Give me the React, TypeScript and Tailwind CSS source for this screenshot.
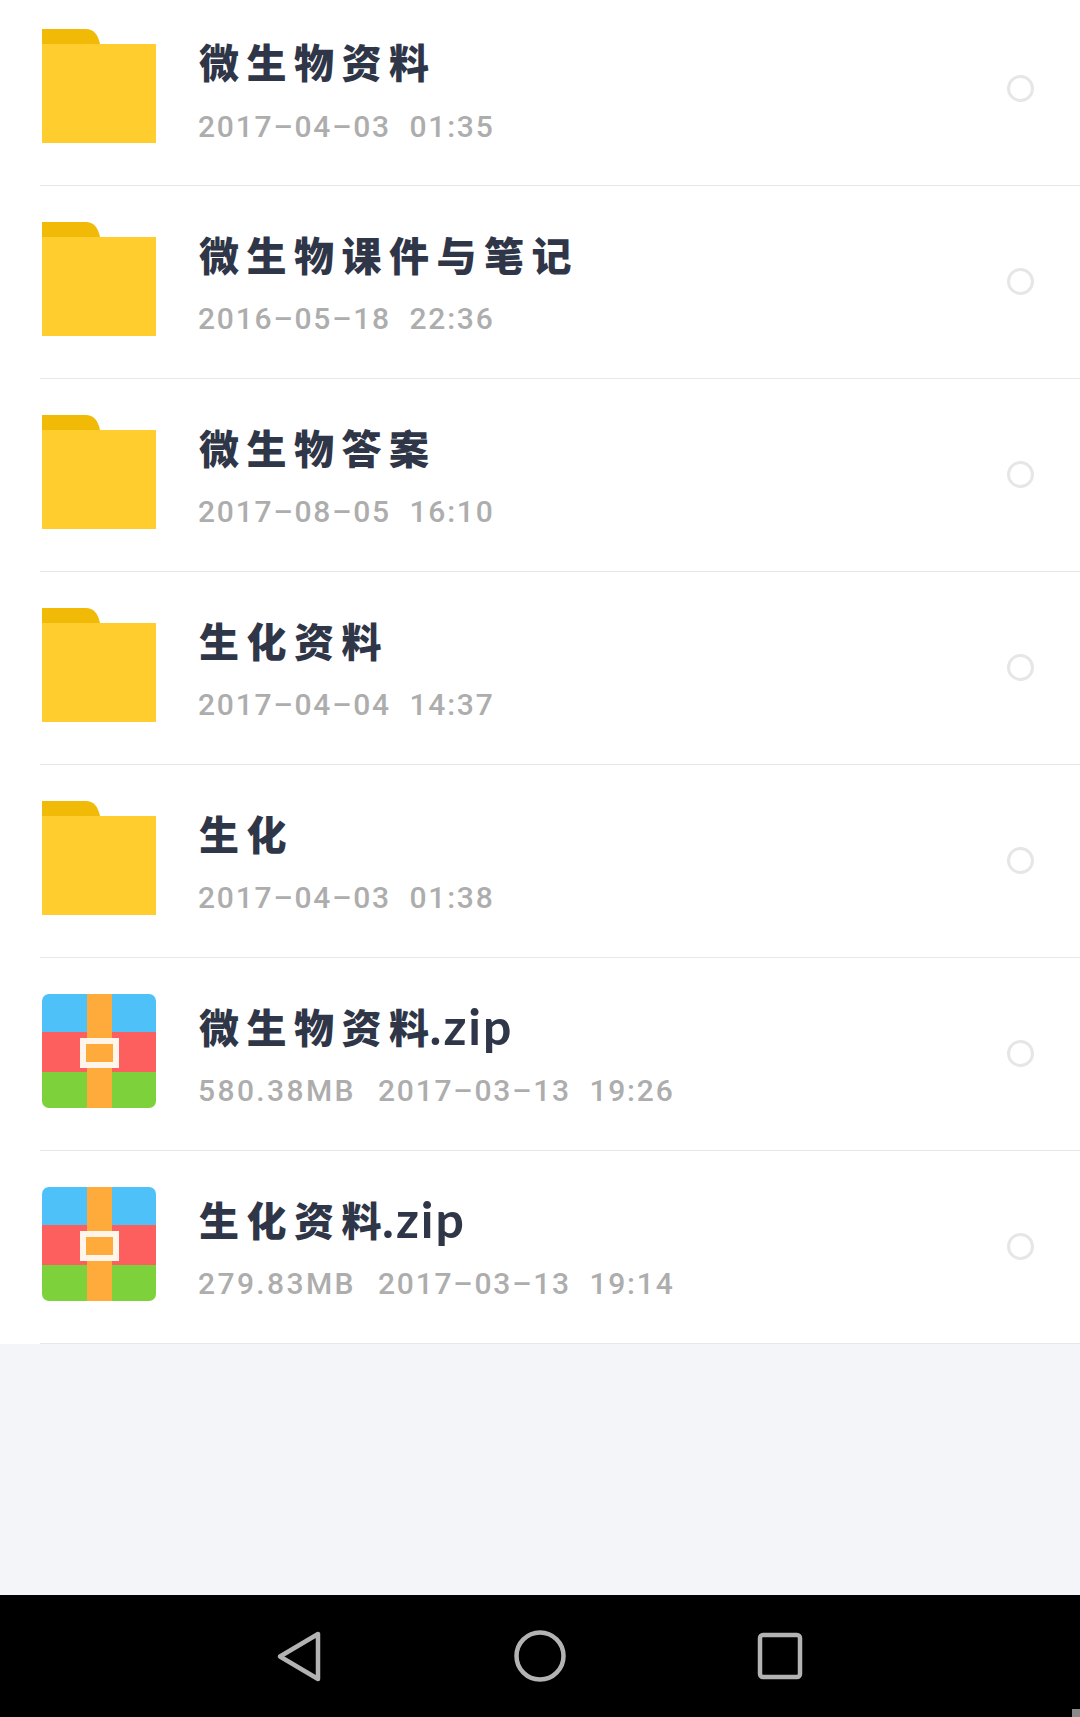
type FileRow = {
  title: string;
  ext?: string;
  size?: string;
  date: string;
  zip?: boolean;
};

const rows: FileRow[] = [
  { title: "微生物资料", date: "2017–04–03  01:35" },
  { title: "微生物课件与笔记", date: "2016–05–18  22:36" },
  { title: "微生物答案", date: "2017–08–05  16:10" },
  { title: "生化资料", date: "2017–04–04  14:37" },
  { title: "生化", date: "2017–04–03  01:38" },
  { title: "微生物资料", ext: ".zip", size: "580.38MB", date: "2017–03–13  19:26", zip: true },
  { title: "生化资料", ext: ".zip", size: "279.83MB", date: "2017–03–13  19:14", zip: true },
];

const FolderIcon = () => (
  <svg width="114" height="114" viewBox="0 0 114 114" className="shrink-0">
    <path d="M0 0H44C51 0 56 5 58 15V20H0Z" fill="#f0ba07" />
    <rect y="15" width="114" height="99" fill="#ffcd2d" />
  </svg>
);

const ZipIcon = () => (
  <svg width="114" height="114" viewBox="0 0 114 114" className="shrink-0">
    <defs>
      <clipPath id="zip-clip">
        <rect width="114" height="114" rx="7" />
      </clipPath>
    </defs>
    <g clipPath="url(#zip-clip)">
      <rect width="114" height="38" fill="#4fc1f9" />
      <rect y="38" width="114" height="40" fill="#fd5f5f" />
      <rect y="78" width="114" height="36" fill="#7dd13b" />
      <rect x="45" width="25" height="114" fill="#ffab3c" />
    </g>
    <rect x="41" y="47" width="33" height="24" fill="#ffab3c" stroke="#fff5ea" strokeWidth="6" />
  </svg>
);

const Row = ({ row, first }: { row: FileRow; first: boolean }) => (
  <div
    className={`relative flex items-start pl-[42px] pr-[46px] ${
      first ? "h-[186px] pt-[29px]" : "h-[193px] pt-[36px]"
    }`}
  >
    {row.zip ? <ZipIcon /> : <FolderIcon />}
    <div className="ml-[43px] -mt-px flex-1 min-w-0">
      <div className="h-[66px] flex items-center whitespace-nowrap text-[40px] leading-none font-black tracking-[7.5px] text-[#2f3648]">
        {row.title}
        {row.ext && (
          <span className="font-['Lato',sans-serif] font-bold text-[50px] tracking-[2px] -ml-[7px]">
            {row.ext}
          </span>
        )}
      </div>
      <div
        className={`h-[40px] -ml-px flex items-center whitespace-pre font-['Roboto',sans-serif] font-medium text-[30px] leading-none tracking-[1.8px] text-[#adadad] ${
          first ? "mt-[13px]" : "mt-[12px]"
        }`}
      >
        {row.size && <span className="mr-[22px] tracking-[2.4px]">{row.size}</span>}
        {row.date}
      </div>
    </div>
    <div className="mt-[46px] h-[27px] w-[27px] rounded-full border-[3px] border-[#e6e6e6]" />
    <div className="absolute left-[40px] right-0 bottom-0 h-px bg-[#e8e8ea]" />
  </div>
);

export default function App() {
  return (
    <div className="relative flex h-[1717px] w-[1080px] flex-col overflow-hidden bg-[#f4f5f9] font-['Noto_Sans_CJK_SC',sans-serif]">
      <div className="bg-white">
        {rows.map((row, i) => (
          <Row key={i} row={row} first={i === 0} />
        ))}
      </div>
      <div className="flex-1" />
      {/* Android nav bar */}
      <div className="relative h-[122px] bg-black">
        <svg width="1080" height="122" viewBox="0 0 1080 122" fill="none" stroke="#b3b3b3" strokeWidth="4.5">
          <path d="M318 39V84L280 61.5Z" strokeLinejoin="round" />
          <circle cx="540" cy="61" r="23.5" />
          <rect x="760" y="40" width="40" height="42" rx="3" />
        </svg>
        <div className="absolute bottom-0 right-0 h-[8px] w-[8px] bg-[#8a8a8a]" />
      </div>
    </div>
  );
}
